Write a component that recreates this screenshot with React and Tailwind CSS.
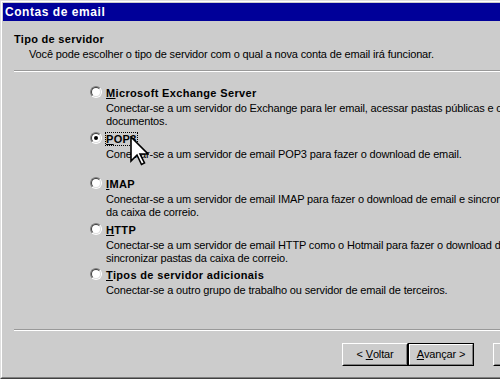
import React from "react";

const font = { fontFamily: '"Liberation Sans", Arial, sans-serif' };

const Radio = ({ checked }) => (
  <span className="mt-[1px] w-[12px] h-[12px] shrink-0 rounded-full border border-t-[#808080] border-l-[#808080] border-b-white border-r-white">
    <span className="flex w-full h-full items-center justify-center rounded-full border border-t-[#404040] border-l-[#404040] border-b-[#dfdfdf] border-r-[#dfdfdf] bg-white">
      {checked && <span className="w-[4px] h-[4px] rounded-full bg-black" />}
    </span>
  </span>
);

const options = [
  {
    key: "M",
    rest: "icrosoft Exchange Server",
    lines: [
      "Conectar-se a um servidor do Exchange para ler email, acessar pastas públicas e compartilhar",
      "documentos.",
    ],
  },
  {
    key: "P",
    rest: "OP3",
    lines: ["Conectar-se a um servidor de email POP3 para fazer o download de email."],
    checked: true,
  },
  {
    key: "I",
    rest: "MAP",
    lines: [
      "Conectar-se a um servidor de email IMAP para fazer o download de email e sincronizar pastas",
      "da caixa de correio.",
    ],
  },
  {
    key: "H",
    rest: "TTP",
    lines: [
      "Conectar-se a um servidor de email HTTP como o Hotmail para fazer o download de email e",
      "sincronizar pastas da caixa de correio.",
    ],
  },
  {
    key: "T",
    rest: "ipos de servidor adicionais",
    lines: ["Conectar-se a outro grupo de trabalho ou servidor de email de terceiros."],
  },
];

const Button = ({ children, isDefault }) =>
  isDefault ? (
    <div className="w-[66px] h-[23px] shrink-0 border border-black">
      <div className="w-full h-full border border-t-white border-l-white border-b-[#808080] border-r-[#808080] flex items-center justify-center text-[11px] tracking-[-0.15px] text-black">
        {children}
      </div>
    </div>
  ) : (
    <div className="w-[66px] h-[23px] shrink-0 border border-t-white border-l-white border-b-black border-r-black">
      <div className="w-full h-full border border-t-[#cccccc] border-l-[#cccccc] border-b-[#808080] border-r-[#808080] flex items-center justify-center text-[11px] tracking-[-0.15px] text-black">
        {children}
      </div>
    </div>
  );

export default function App() {
  return (
    <div style={font} className="relative w-[500px] h-[379px] overflow-hidden bg-[#cccccc] text-black">
      <div className="h-full border-t border-l border-b border-t-[#dfdfdf] border-l-[#dfdfdf] border-b-[#404040]">
        <div className="h-full border-t border-l border-b border-t-white border-l-white border-b-[#808080] pt-[1px] pl-[1px]">
          {/* title bar */}
          <div className="h-[18px] bg-[#000099] flex items-center pl-[2px] text-white font-bold text-[12px] tracking-[0.55px] whitespace-nowrap">
            Contas de email
          </div>

          {/* header */}
          <div className="pt-[12px] pl-[11px] whitespace-nowrap">
            <p className="text-[11px] leading-[13px] font-bold tracking-[0.3px]">Tipo de servidor</p>
            <p className="mt-[2px] pl-[15px] text-[11px] leading-[13px] tracking-[-0.15px]">
              Você pode escolher o tipo de servidor com o qual a nova conta de email irá funcionar.
            </p>
          </div>
          <div className="mt-[9px] ml-[11px] border-t border-b border-t-[#999999] border-b-white" />

          {/* options */}
          <div className="mt-[13px] pl-[87px] flex flex-col gap-[2.5px] whitespace-nowrap">
            {options.map((o) => (
              <div key={o.key} className="h-[43px]">
                <div className="h-[16px] flex items-start gap-[4px]">
                  <Radio checked={o.checked} />
                  <span
                    className={`text-[11px] font-bold tracking-[0.35px] ${
                      o.checked
                        ? "outline outline-1 outline-dotted outline-black outline-offset-[-1px] px-[1px] -ml-[1px] leading-[14px] mt-[1px]"
                        : "leading-[16px]"
                    }`}
                  >
                    <span className="underline underline-offset-1">{o.key}</span>
                    {o.rest}
                  </span>
                </div>
                <div className="mt-[1px] pl-[16px] text-[11px] leading-[13px] tracking-[-0.15px]">
                  {o.lines.map((l) => (
                    <p key={l}>{l}</p>
                  ))}
                </div>
              </div>
            ))}
          </div>

          {/* bottom separator */}
          <div className="mt-[19px] ml-[11px] border-t border-b border-t-[#999999] border-b-white" />

          {/* buttons */}
          <div className="mt-[12px] pl-[339px] flex">
            <Button>
              &lt; <span className="underline ml-[3px]">V</span>oltar
            </Button>
            <Button isDefault>
              <span className="underline">A</span>vançar &gt;
            </Button>
            <div className="ml-[19px]">
              <Button>Cancelar</Button>
            </div>
          </div>
        </div>
      </div>

      {/* mouse pointer */}
      <svg className="absolute left-[130px] top-[136px]" width="19" height="30" viewBox="0 0 19 30">
        <polygon
          points="1,1 1,25 7,19 11.5,28.5 14.5,27 10,18 18,18"
          fill="white"
          stroke="black"
          strokeWidth="1.6"
          strokeLinejoin="miter"
        />
      </svg>
    </div>
  );
}
